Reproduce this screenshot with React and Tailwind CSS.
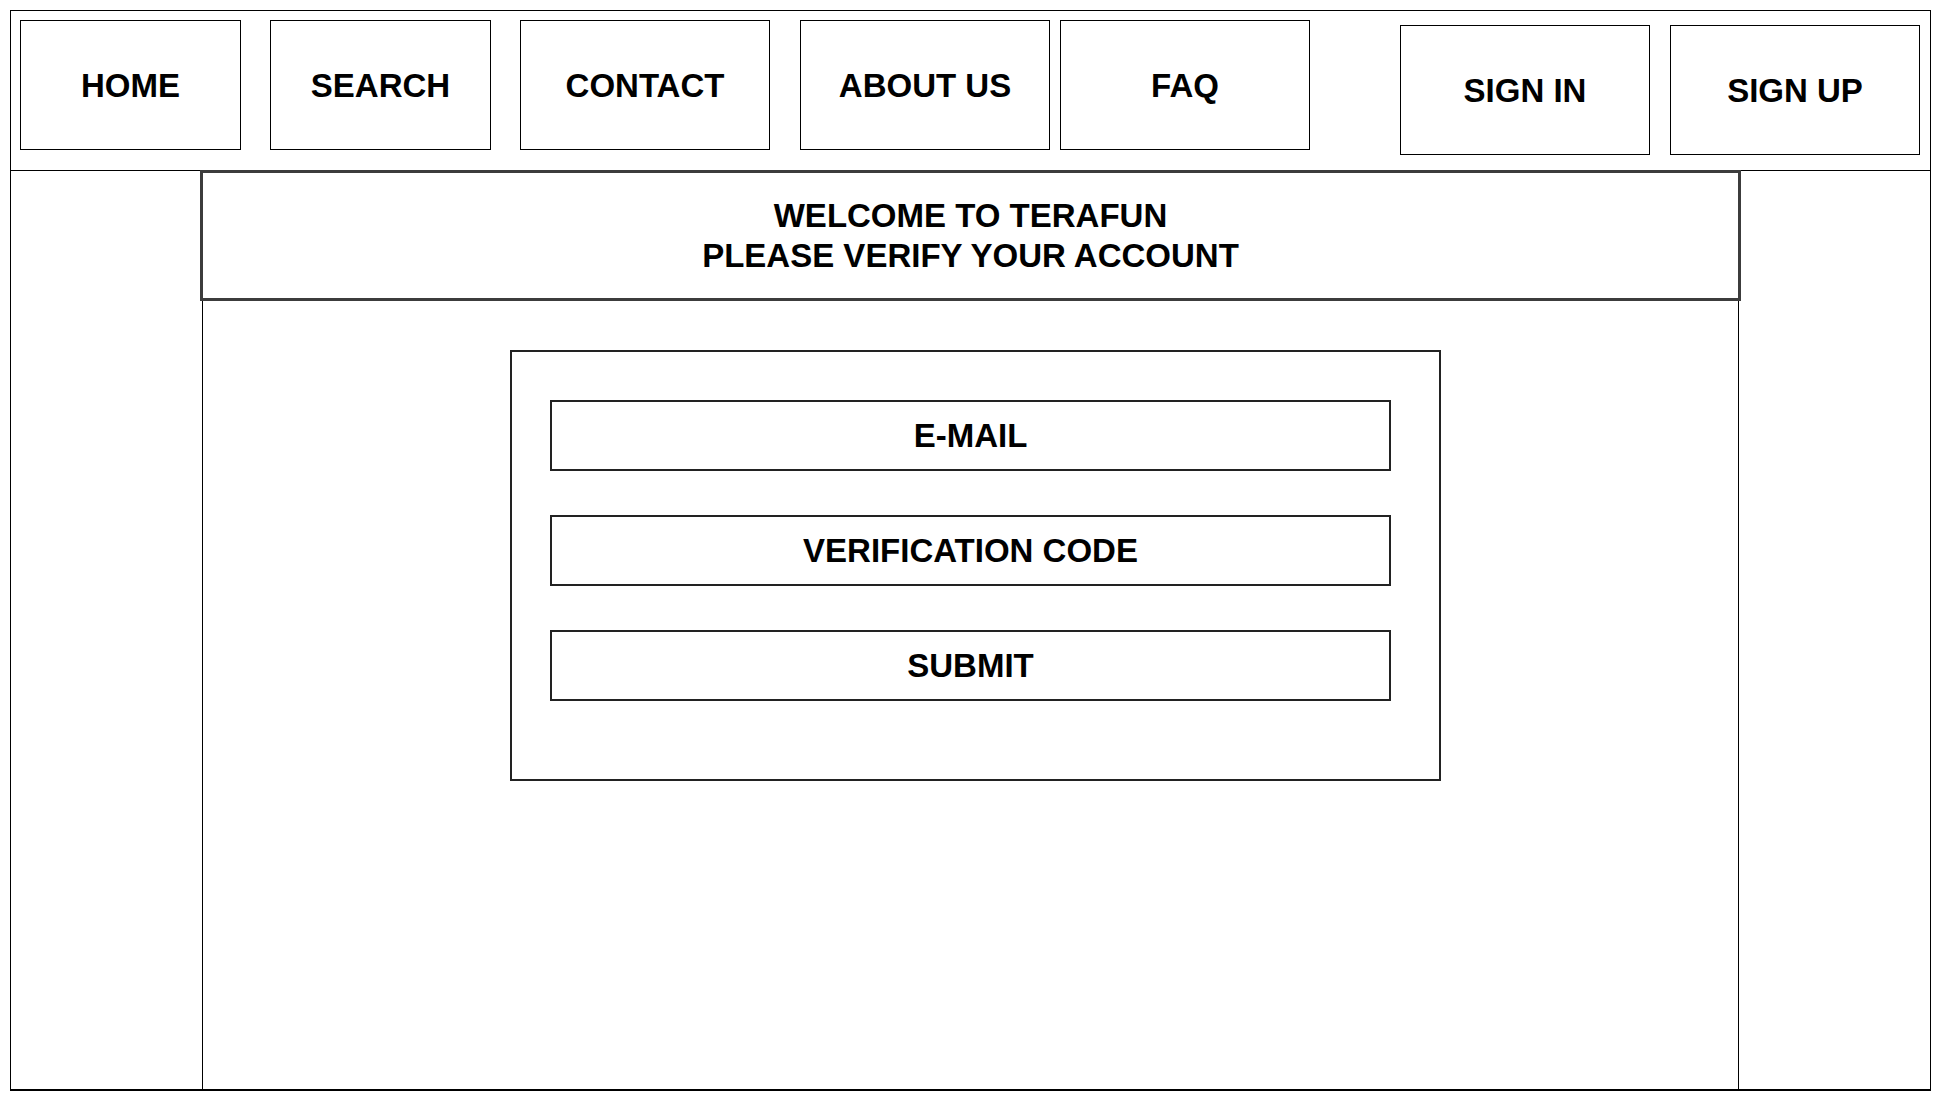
import React from "react";

const navLeft = [
  { label: "HOME", cls: "w-[221px]" },
  { label: "SEARCH", cls: "w-[221px] ml-[29px]" },
  { label: "CONTACT", cls: "w-[250px] ml-[29px]" },
  { label: "ABOUT US", cls: "w-[250px] ml-[30px]" },
  { label: "FAQ", cls: "w-[250px] ml-[10px]" },
];

const fields = ["E-MAIL", "VERIFICATION CODE", "SUBMIT"];

function NavBox({ label, className }) {
  return (
    <div
      className={`h-[130px] border border-black flex items-center justify-center text-[33px] font-bold leading-none text-black ${className}`}
    >
      {label}
    </div>
  );
}

export default function App() {
  return (
    <div
      className="p-[10px] bg-white"
      style={{ fontFamily: '"Liberation Sans", Arial, sans-serif' }}
    >
      <div className="w-[1921px] h-[1081px] border border-b-2 border-black flex flex-col">
        {/* top nav */}
        <div className="h-[160px] shrink-0 border-b border-black flex items-start pl-[9px] pt-[9px]">
          {navLeft.map((n) => (
            <NavBox key={n.label} label={n.label} className={n.cls} />
          ))}
          <NavBox label="SIGN IN" className="w-[250px] ml-[90px] mt-[5px]" />
          <NavBox label="SIGN UP" className="w-[250px] ml-[20px] mt-[5px]" />
        </div>

        {/* body */}
        <div className="flex-1 flex">
          <div className="w-[191px] shrink-0" />
          <div className="w-[1537px] shrink-0 border-x border-black flex flex-col">
            <div className="h-[131px] -mt-[1px] -mx-[3px] border-[3px] border-[#3c3c3c] flex flex-col items-center justify-center text-[33px] font-bold leading-[40px] text-black">
              <div>WELCOME TO TERAFUN</div>
              <div>PLEASE VERIFY YOUR ACCOUNT</div>
            </div>

            <div className="mt-[49px] ml-[307px] w-[931px] border-2 border-[#222] pt-[48px] pb-[78px] pl-[38px] flex flex-col gap-[44px]">
              {fields.map((f) => (
                <div
                  key={f}
                  className="w-[841px] h-[71px] border-2 border-[#222] flex items-center justify-center text-[33px] font-bold leading-none text-black"
                >
                  {f}
                </div>
              ))}
            </div>
          </div>
        </div>
      </div>
    </div>
  );
}
